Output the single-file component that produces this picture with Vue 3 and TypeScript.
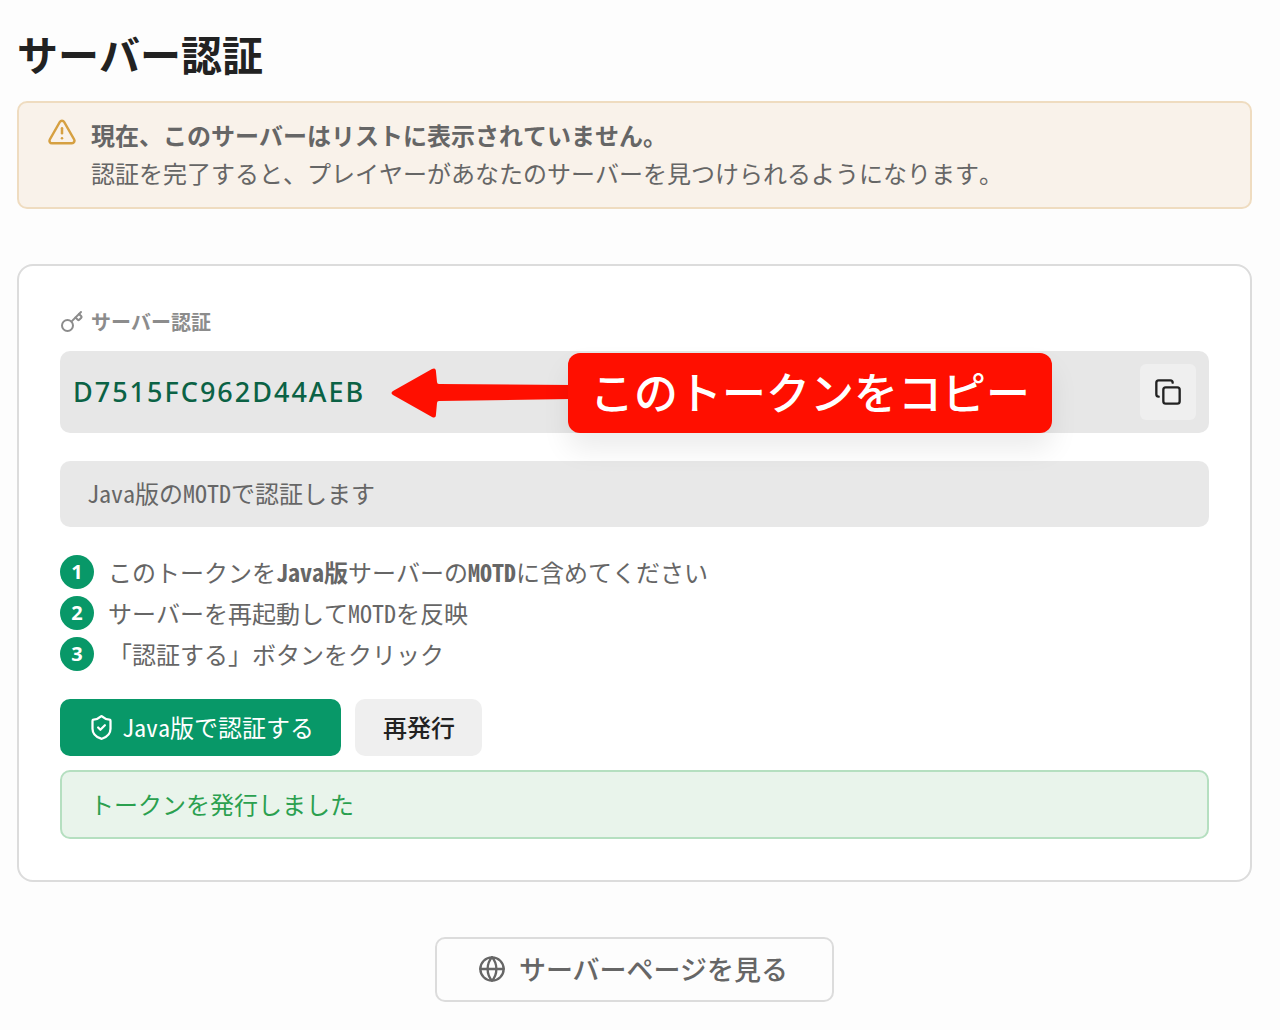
<script setup lang="ts">
import { ref } from 'vue'

interface StepPart {
  text: string
  strong?: boolean
}

const token = ref('D7515FC962D44AEB')

const steps: StepPart[][] = [
  [
    { text: 'このトークンを' },
    { text: 'Java版', strong: true },
    { text: 'サーバーの' },
    { text: 'MOTD', strong: true },
    { text: 'に含めてください' },
  ],
  [{ text: 'サーバーを再起動してMOTDを反映' }],
  [{ text: '「認証する」ボタンをクリック' }],
]

function copyToken(): void {
  void navigator.clipboard?.writeText(token.value)
}
</script>

<template>
  <main class="page">
    <h1 class="title">サーバー認証</h1>

    <section class="notice" role="alert">
      <svg class="notice-icon" viewBox="0 0 24 24" aria-hidden="true">
        <path d="m21.73 18-8-14a2 2 0 0 0-3.48 0l-8 14A2 2 0 0 0 4 21h16a2 2 0 0 0 1.73-3Z" />
        <path d="M12 9v4" />
        <path d="M12 17h.01" />
      </svg>
      <div>
        <p class="notice-lead">現在、このサーバーはリストに表示されていません。</p>
        <p>認証を完了すると、プレイヤーがあなたのサーバーを見つけられるようになります。</p>
      </div>
    </section>

    <section class="card">
      <h2 class="label">
        <svg class="label-icon" viewBox="0 0 24 24" aria-hidden="true">
          <circle cx="7.5" cy="15.5" r="5.5" />
          <path d="m21 2-9.6 9.6" />
          <path d="m15.5 7.5 2.3 2.3a1 1 0 0 0 1.4 0l2.1-2.1a1 1 0 0 0 0-1.4L19 4" />
        </svg>
        サーバー認証
      </h2>

      <div class="token-box">
        <code class="token">{{ token }}</code>
        <button class="copy" type="button" aria-label="コピー" @click="copyToken">
          <svg viewBox="0 0 24 24" aria-hidden="true">
            <rect x="8" y="8" width="14" height="14" rx="2" />
            <path d="M4 16c-1.1 0-2-.9-2-2V4c0-1.1.9-2 2-2h10c1.1 0 2 .9 2 2" />
          </svg>
        </button>
        <div class="callout">
          <svg class="arrow" viewBox="0 0 180 52" aria-hidden="true">
            <path d="M2 24 41 2Q45 0 45 5L46 15Q46 17 48 17L180 18V32L48 34Q46 34 46 36L45 47Q45 52 41 50L2 28Q-1 26 2 24Z" />
          </svg>
          <span class="callout-text">このトークンをコピー</span>
        </div>
      </div>

      <p class="method">Java版のMOTDで認証します</p>

      <ol class="steps">
        <li v-for="(parts, i) in steps" :key="i">
          <span class="step-number">{{ i + 1 }}</span>
          <span>
            <component :is="part.strong ? 'strong' : 'span'" v-for="(part, j) in parts" :key="j">{{ part.text }}</component>
          </span>
        </li>
      </ol>

      <div class="actions">
        <button class="button primary" type="button">
          <svg viewBox="0 0 24 24" aria-hidden="true">
            <path d="M20 13c0 5-3.5 7.5-7.66 8.95a1 1 0 0 1-.67-.01C7.5 20.5 4 18 4 13V6a1 1 0 0 1 1-1c2 0 4.5-1.2 6.24-2.72a1.17 1.17 0 0 1 1.52 0C14.51 3.81 17 5 19 5a1 1 0 0 1 1 1z" />
            <path d="m9 12 2 2 4-4" />
          </svg>
          Java版で認証する
        </button>
        <button class="button secondary" type="button">再発行</button>
      </div>

      <p class="success" role="status">トークンを発行しました</p>
    </section>

    <a class="server-link" href="#">
      <svg viewBox="0 0 24 24" aria-hidden="true">
        <circle cx="12" cy="12" r="10" />
        <path d="M12 2c-5 5.5-5 14.5 0 20 5-5.5 5-14.5 0-20" />
        <path d="M2 12h20" />
      </svg>
      サーバーページを見る
    </a>
  </main>
</template>

<style>
body {
  margin: 0;
  background: #fdfdfd;
}
</style>

<style scoped>
.page {
  display: flex;
  flex-direction: column;
  padding: 28px 28px 28px 17px;
  color: #666;
  font-family: "Noto Sans Mono CJK JP", "Noto Sans CJK JP", sans-serif;
  font-size: 24px;
  line-height: 38px;
}

svg {
  flex: none;
  fill: none;
  stroke: currentColor;
  stroke-width: 2;
  stroke-linecap: round;
  stroke-linejoin: round;
}

p,
h1,
h2,
ol {
  margin: 0;
}

.title {
  color: #222;
  font-size: 41px;
  line-height: 50px;
}

.notice {
  display: flex;
  gap: 14px;
  margin-top: 23px;
  padding: 13px 28px 15px;
  border: 2px solid #efdcc0;
  border-radius: 10px;
  background: #f9f2ea;
}

.notice-icon {
  width: 30px;
  height: 30px;
  margin-top: 1px;
  color: #d6a041;
}

.notice-lead {
  font-weight: 700;
}

.card {
  display: flex;
  flex-direction: column;
  margin-top: 55px;
  padding: 41px;
  border: 2px solid #dcdcdc;
  border-radius: 16px;
  background: #fff;
}

.label {
  display: flex;
  align-items: center;
  gap: 7px;
  color: #8c8c8c;
  font-size: 20px;
  line-height: 30px;
}

.label-icon {
  width: 24px;
  height: 24px;
}

.token-box {
  position: relative;
  display: flex;
  align-items: center;
  justify-content: space-between;
  margin-top: 14px;
  padding: 13px;
  border-radius: 10px;
  background: #e7e7e7;
}

.token {
  color: #0b6245;
  font-family: "Noto Sans", sans-serif;
  font-size: 27px;
  font-weight: 500;
  letter-spacing: 2px;
}

.copy {
  display: flex;
  align-items: center;
  justify-content: center;
  width: 56px;
  height: 56px;
  padding: 0;
  border: 0;
  border-radius: 6px;
  background: #efefef;
  color: #222;
}

.copy svg {
  width: 28px;
  height: 28px;
}

.callout {
  position: absolute;
  top: 2px;
  left: 331px;
  display: flex;
  align-items: center;
}

.arrow {
  width: 180px;
  height: 52px;
  margin-right: -3px;
  fill: #ff0f00;
  stroke: none;
}

.callout-text {
  padding: 0 22px 4px;
  border-radius: 12px;
  background: #ff0f00;
  box-shadow: 0 16px 28px rgb(0 0 0 / 8%);
  color: #fff;
  font-family: "Noto Sans CJK JP", sans-serif;
  font-size: 44px;
  font-weight: 500;
  line-height: 76px;
  white-space: nowrap;
}

.method {
  margin-top: 28px;
  padding: 13px 27px 15px;
  border-radius: 10px;
  background: rgb(0 0 0 / 9%);
}

.steps {
  display: flex;
  flex-direction: column;
  gap: 7px;
  margin-top: 28px;
  padding: 0;
  list-style: none;
}

.steps li {
  display: flex;
  align-items: center;
  gap: 14px;
  line-height: 34px;
}

.step-number {
  flex: none;
  width: 34px;
  border-radius: 50%;
  background: #089868;
  color: #fff;
  font-family: "Noto Sans", sans-serif;
  font-size: 20px;
  font-weight: 700;
  text-align: center;
}

.actions {
  display: flex;
  gap: 14px;
  margin-top: 28px;
}

.button {
  display: flex;
  align-items: center;
  gap: 7px;
  padding: 0 27px 1px 28px;
  border: 0;
  border-radius: 10px;
  font-family: inherit;
  font-size: 24px;
  font-weight: 500;
  line-height: 56px;
}

.button svg {
  width: 27px;
  height: 27px;
}

.primary {
  background: #089868;
  color: #fff;
}

.secondary {
  background: #efefef;
  color: #222;
  font-family: "Noto Sans CJK JP", sans-serif;
}

.success {
  margin-top: 14px;
  padding: 13px 28px 14px;
  border: 2px solid #b5dfc0;
  border-radius: 10px;
  background: #e9f4eb;
  color: #2ba04f;
}

.server-link {
  display: flex;
  align-items: center;
  align-self: center;
  gap: 13px;
  margin-top: 55px;
  padding: 0 44px 1px 41px;
  border: 2px solid #dcdcdc;
  border-radius: 10px;
  color: #666;
  font-family: "Noto Sans CJK JP", sans-serif;
  font-size: 27px;
  font-weight: 500;
  line-height: 60px;
  text-decoration: none;
}

.server-link svg {
  width: 28px;
  height: 28px;
}
</style>
